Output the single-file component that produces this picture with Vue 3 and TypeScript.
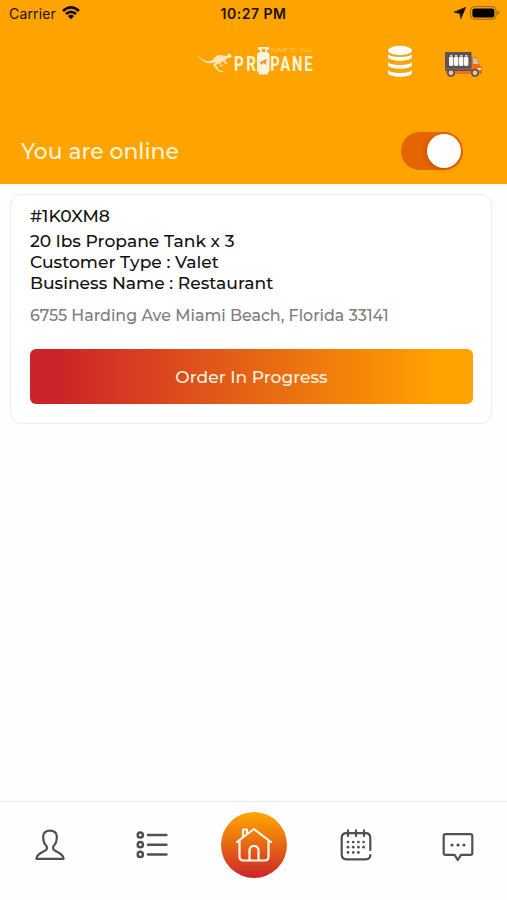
<script setup lang="ts">
import { ref } from 'vue'

const online = ref(true)
const order = {
  id: '#1K0XM8',
  item: '20 lbs Propane Tank x 3',
  customer: 'Customer Type : Valet',
  business: 'Business Name : Restaurant',
  address: '6755 Harding Ave Miami Beach, Florida 33141',
}
const tankXs: number[] = [5, 10, 15, 20]
const listYs: number[] = [5, 14.7, 24.4]
const dots: [number, number][] = [
  [8, 13], [13.2, 13], [18.4, 13], [23.6, 13],
  [8, 18.2], [13.2, 18.2], [18.4, 18.2], [23.6, 18.2],
  [8, 23.4], [13.2, 23.4], [18.4, 23.4],
]
</script>

<template>
  <main class="screen">
    <header class="header">
      <div class="status">
        <div class="carrier">
          <span class="carrier-name">Carrier</span>
          <svg width="18" height="14" viewBox="0 0 18 14">
            <g fill="none" stroke="#140d00" stroke-width="2.7">
              <path d="M1 4.9Q9-2 17 4.9" />
              <path d="M3.9 8Q9 3.6 14.1 8" />
            </g>
            <path d="M5.9 9.9Q9 7.4 12.1 9.9L9 13.2Z" fill="#140d00" />
          </svg>
        </div>
        <span class="time">10:27 PM</span>
        <div class="power">
          <svg width="12" height="12" viewBox="0 0 12 12"><path d="M11.5.4 6.8 11.6 5.9 6.3.2 5.2Z" fill="#140d00" stroke="#140d00" stroke-width=".8" stroke-linejoin="round" /></svg>
          <svg width="30" height="14" viewBox="0 0 30 14">
            <rect x=".6" y=".6" width="25.5" height="12.6" rx="3.8" fill="none" stroke="#9c6500" stroke-width="1" />
            <rect x="2.4" y="2.4" width="22" height="9" rx="2.2" fill="#000" />
            <path d="M27.5 4.8Q29.3 5.4 29.3 7T27.5 9.2Z" fill="#9c6500" />
          </svg>
        </div>
      </div>

      <div class="brand-row">
        <svg class="logo" width="118" height="30" viewBox="0 0 118 30">
          <path d="M0 8C5 10 8 15 14 14C18 13 19 8 24 8C28 8 30 10 32 8L32 6L34 7L36 9L34 11L31 11L29 14L32 17L30 17L26 14L24 16L20 18L23 23L29 25L23 25L17 18L20 15C15 17 9 17 5 12Z" fill="#ffe6b5" />
          <path d="M25 14L24 19L27 18" fill="none" stroke="#ffe6b5" />
          <g transform="translate(38 24.4) scale(.76 1)">
            <text class="wordmark" textLength="29">PR</text>
          </g>
          <g transform="translate(74.3 24.4) scale(.74 1)">
            <text class="wordmark" textLength="57">PANE</text>
          </g>
          <path d="M63 3V0.8H72V3M65 1V6M70 1V6" fill="none" stroke="#fff4dc" stroke-width="1.8" />
          <rect x="61" y="5" width="12.5" height="21" rx="3.5" fill="#fff4dc" />
          <rect x="63" y="25" width="9" height="2.5" fill="#fff4dc" />
          <path d="M63 14C65.5 17 66.5 13 68.5 13L71.5 12L69.5 15L70.5 18L67.5 16L65.5 18Z" fill="#f58a45" />
          <text x="74" y="4.6" class="tagline" textLength="42" lengthAdjust="spacingAndGlyphs">PUMP TO YOU</text>
        </svg>
        <svg width="26" height="34" viewBox="0 0 26 34" class="stack">
          <ellipse cx="13" cy="5.5" rx="12" ry="4.7" fill="#fff" />
          <path v-for="y in [9, 17, 25]" :key="y" :d="`M1 ${y + .3}C5 ${y + 4} 21 ${y + 4} 25 ${y + .3}V${y + 3}C24 ${y + 8} 2 ${y + 8} 1 ${y + 3}Z`" fill="#fff" />
        </svg>
        <svg width="39" height="28" viewBox="0 0 39 28" class="truck">
          <path d="M27 6H32L36 14L38 17V23H2V20H27Z" fill="#f56b15" />
          <path d="M29 7H32L35 13H29Z" fill="#bcc4be" />
          <rect x="1" y="1" width="26.5" height="19" fill="#5c5352" />
          <g v-for="x in tankXs" :key="x">
            <rect :x="x" y="5.5" width="4.4" height="9.5" rx="1.5" fill="#fff7ed" />
            <path :d="`M${x + 1} 4.7H${x + 3.4}`" stroke="#fff7ed" />
          </g>
          <path d="M1 18H27" stroke="#7a706c" stroke-width="1" />
          <path d="M33.5 18H37" stroke="#ffe9c2" stroke-width="2" />
          <g fill="#d2ccc8" stroke="#6a5148" stroke-width="1.7">
            <circle cx="7" cy="21.8" r="3.2" />
            <circle cx="31" cy="21.8" r="3.2" />
          </g>
        </svg>
      </div>

      <div class="online-row">
        <span class="online-label">You are online</span>
        <button class="switch" :class="{ on: online }" role="switch" :aria-checked="online" @click="online = !online">
          <span class="knob" />
        </button>
      </div>
    </header>

    <section class="content">
      <article class="card">
        <div class="line id">{{ order.id }}</div>
        <div class="line item">{{ order.item }}</div>
        <div class="line customer">{{ order.customer }}</div>
        <div class="line business">{{ order.business }}</div>
        <div class="address">{{ order.address }}</div>
        <button class="progress"><span>Order In Progress</span></button>
      </article>
    </section>

    <nav class="tabs">
      <a class="tab">
        <svg width="30" height="32" viewBox="0 0 30 32" class="ink">
          <path d="M11.8 17.5C7.8 13.8 8.2 10.8 8.2 7.2Q8.7 1.6 15 1.6T21.8 7.2C21.8 10.8 22.2 13.8 18.2 17.5V20.2C19.2 23 28.5 23.5 28.6 29.8H1.4C1.5 23.5 10.8 23 11.8 20.2Z" />
        </svg>
      </a>
      <a class="tab">
        <svg width="32" height="30" viewBox="0 0 32 30" class="ink">
          <g v-for="y in listYs" :key="y">
            <circle cx="4.3" :cy="y" r="2.6" stroke-width="2.5" />
            <path :d="`M12 ${y}H30.4`" stroke-width="2.5" />
          </g>
        </svg>
      </a>
      <a class="tab">
        <span class="home">
          <svg width="38" height="36" viewBox="0 0 38 36">
            <path d="M2 15 19 2 36 15M4.5 13.5V29.5Q4.5 33.5 8.5 33.5H29.5Q33.5 33.5 33.5 29.5V13.5M8 10V2.5H12V7M14.5 33V23.5Q14.5 19 19 19T23.5 23.5V33" fill="none" stroke="#fff7ee" stroke-width="2.2" stroke-linecap="round" stroke-linejoin="round" />
          </svg>
        </span>
      </a>
      <a class="tab">
        <svg width="32" height="32" viewBox="0 0 32 32" class="ink">
          <path d="M30.3 21V9Q30.3 4.2 25.5 4.2H6.5Q1.7 4.2 1.7 9V25.5Q1.7 30.3 6.5 30.3H25.5Q30.3 30.3 30.3 26M8 1.3V7M16 1.3V7M24 1.3V7" />
          <circle v-for="([x, y], i) in dots" :key="i" :cx="x" :cy="y" r="1.35" class="dot" />
        </svg>
      </a>
      <a class="tab">
        <svg width="32" height="32" viewBox="0 0 32 32" class="ink chat">
          <path d="M3.5 4.2H28.5Q30.3 4.2 30.3 6V23Q30.3 24.8 28.5 24.8H19L15.8 30 12.6 24.8H3.5Q1.7 24.8 1.7 23V6Q1.7 4.2 3.5 4.2Z" />
          <circle v-for="x in [10, 16, 22]" :key="x" :cx="x" cy="15" r="1.6" class="dot" />
        </svg>
      </a>
    </nav>
  </main>
</template>

<style>
body {
  margin: 0;
  background: #fff;
}
</style>

<style scoped>
.screen {
  display: flex;
  flex-direction: column;
  height: 900px;
  background: #fefefe;
  font-family: Montserrat, Inter, sans-serif;
  font-weight: 500;
  color: #111;
}
svg {
  display: block;
  flex: none;
}
button {
  border: 0;
  padding: 0;
  font-family: inherit;
  font-weight: inherit;
}
.header {
  display: flex;
  flex-direction: column;
  height: 184px;
  background: #ffa300;
}
.status {
  display: grid;
  grid-template-columns: 1fr auto 1fr;
  align-items: center;
  height: 27px;
  padding: 0 7px 0 9px;
  font-family: Inter, sans-serif;
  font-size: 14px;
  font-weight: 400;
  line-height: 27px;
  color: #1c1200;
}
.carrier {
  display: flex;
  align-items: center;
  gap: 6px;
}
.carrier-name {
  letter-spacing: 0.15px;
}
.carrier svg {
  margin-top: -1px;
}
.time {
  margin-left: -2px;
  font-weight: 600;
  letter-spacing: 0.5px;
}
.power {
  display: flex;
  align-items: center;
  justify-content: flex-end;
  gap: 4px;
  margin-top: -1px;
}
.brand-row {
  display: flex;
  align-items: center;
  height: 70px;
  padding-left: 196px;
}
.logo {
  overflow: visible;
}
.wordmark {
  font: 700 20px Roboto, sans-serif;
  fill: #fff4dc;
}
.tagline {
  font: 5px Inter, sans-serif;
  fill: #ffc65e;
}
.stack {
  margin-left: 73px;
}
.truck {
  margin: 5px 0 0 31px;
}
.online-row {
  display: flex;
  align-items: center;
  justify-content: space-between;
  height: 40px;
  margin-top: 34px;
  padding: 0 44px 0 21px;
}
.online-label {
  font-size: 21.9px;
  color: #fff4dc;
}
.switch {
  display: flex;
  align-items: center;
  width: 62px;
  height: 38px;
  margin-top: -1px;
  padding: 0 2px;
  border-radius: 19px;
  background: #e66500;
}
.switch.on {
  justify-content: flex-end;
}
.knob {
  width: 34px;
  height: 34px;
  border-radius: 50%;
  background: #fff;
  box-shadow: -1px 1px 4px rgba(120, 40, 0, 0.35);
}
.content {
  flex: 1;
  padding: 10px 15px 0 10px;
}
.card {
  box-sizing: border-box;
  height: 230px;
  padding: 10px 18px 0 19px;
  border: 1px solid #ededed;
  border-radius: 11px;
  background: #fff;
}
.line {
  height: 21px;
  font-size: 17.15px;
  line-height: 21px;
  white-space: nowrap;
}
.id {
  margin-bottom: 4px;
}
.address {
  margin-top: 12px;
  height: 22px;
  font-size: 15.9px;
  line-height: 22px;
  color: #7c7c7c;
  white-space: nowrap;
}
.progress {
  display: block;
  width: 443px;
  height: 55px;
  margin-top: 22px;
  border-radius: 6px;
  background: linear-gradient(90deg, #cc2529 7%, #ffa300 93%);
  color: #fff1e0;
  font-size: 17.1px;
}
.tabs {
  box-sizing: border-box;
  display: grid;
  grid-template-columns: 99px 105px 99px 105px 99px;
  height: 99px;
  padding-bottom: 11.5px;
  border-top: 1px solid #ebebeb;
}
.tab {
  display: flex;
  align-items: center;
  justify-content: center;
}
.ink {
  fill: none;
  stroke: #505050;
  stroke-width: 2.2;
  stroke-linecap: round;
  stroke-linejoin: round;
}
.dot {
  fill: #505050;
  stroke: none;
}
.chat {
  margin-top: 1px;
}
.home {
  display: flex;
  align-items: center;
  justify-content: center;
  width: 66px;
  height: 66px;
  border-radius: 50%;
  background: linear-gradient(180deg, #ffa300 4%, #cc2529 100%);
}
</style>
